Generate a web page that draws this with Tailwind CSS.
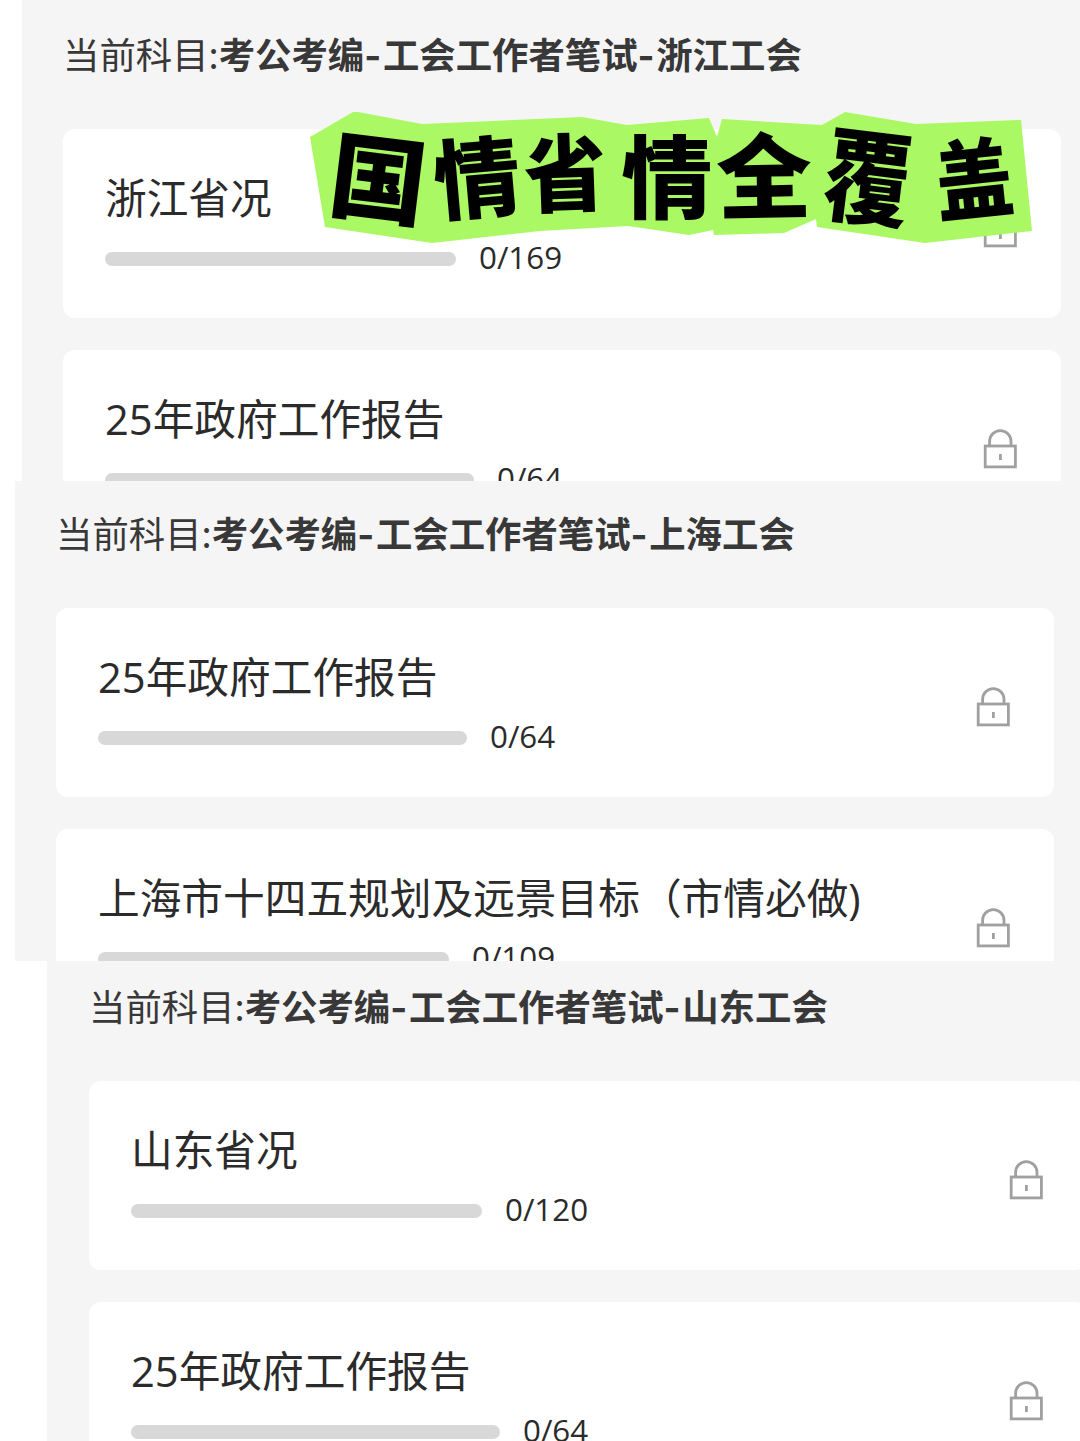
<!DOCTYPE html>
<html lang="zh-CN">
  <head>
    <meta charset="UTF-8" />
    <meta name="viewport" content="width=device-width, initial-scale=1.0" />
    <title>当前科目</title>
    <script src="https://cdn.jsdelivr.net/npm/@tailwindcss/browser@4"></script>
  </head>
  <body class="bg-white font-['Open_Sans','Noto_Sans_CJK_SC',sans-serif] text-[#2b2b2b]">
    <!-- lock icon shared by every card -->
    <svg class="hidden">
      <symbol id="lock" viewBox="0 0 34 40">
        <g fill="none" stroke="#a0a0a0" stroke-width="2.8">
          <rect x="2.2" y="17" width="30.2" height="20.9" />
          <path d="M6.6 17V12.4a10.7 10.7 0 0 1 21.4 0V17" />
          <path d="M17.4 25v6" />
        </g>
      </symbol>
    </svg>

    <div class="relative flex h-[1441px] w-[1080px] flex-col overflow-hidden">
      <section class="ml-[22px] h-[481px] shrink-0 overflow-hidden bg-[#f5f5f5] pl-[41px]">
        <h2 class="flex h-[129px] items-start pt-[29px] font-['Noto_Sans_CJK_SC',sans-serif] text-[36.4px] leading-[48px] whitespace-nowrap text-[#383838]">
          <span>当前科目:</span>
          <b>考公考编<span class="font-[Inter] tracking-[1.6px]">-</span>工会工作者笔试<span class="font-[Inter] tracking-[1.6px]">-</span>浙江工会</b>
        </h2>
        <div class="flex w-[998px] flex-col gap-8">
          <div class="flex h-[189px] items-start justify-between rounded-xl bg-white pr-[44px] pl-[42px]">
            <div class="pt-[43px]">
              <h3 class="text-[41.7px] leading-[52px] whitespace-nowrap">浙江省况</h3>
              <div class="mt-[15px] flex h-10 items-center gap-[23px]">
                <div class="h-[14px] w-[351px] rounded-full bg-[#d8d8d8]"></div>
                <span class="pb-[3px] text-[31.3px] leading-[35px]">0/169</span>
              </div>
            </div>
            <svg class="mt-[79px] h-10 w-[34px]"><use href="#lock" /></svg>
          </div>
          <div class="flex h-[189px] items-start justify-between rounded-xl bg-white pr-[44px] pl-[42px]">
            <div class="pt-[43px]">
              <h3 class="text-[41.7px] leading-[52px] whitespace-nowrap">25年政府工作报告</h3>
              <div class="mt-[15px] flex h-10 items-center gap-[23px]">
                <div class="h-[14px] w-[369px] rounded-full bg-[#d8d8d8]"></div>
                <span class="pb-[3px] text-[31.3px] leading-[35px]">0/64</span>
              </div>
            </div>
            <svg class="mt-[79px] h-10 w-[34px]"><use href="#lock" /></svg>
          </div>
        </div>
      </section>

      <section class="ml-[15px] h-[480px] shrink-0 overflow-hidden bg-[#f5f5f5] pl-[41px]">
        <h2 class="flex h-[127px] items-start pt-[27px] font-['Noto_Sans_CJK_SC',sans-serif] text-[36.4px] leading-[48px] whitespace-nowrap text-[#383838]">
          <span>当前科目:</span>
          <b>考公考编<span class="font-[Inter] tracking-[1.6px]">-</span>工会工作者笔试<span class="font-[Inter] tracking-[1.6px]">-</span>上海工会</b>
        </h2>
        <div class="flex w-[998px] flex-col gap-8">
          <div class="flex h-[189px] items-start justify-between rounded-xl bg-white pr-[44px] pl-[42px]">
            <div class="pt-[43px]">
              <h3 class="text-[41.7px] leading-[52px] whitespace-nowrap">25年政府工作报告</h3>
              <div class="mt-[15px] flex h-10 items-center gap-[23px]">
                <div class="h-[14px] w-[369px] rounded-full bg-[#d8d8d8]"></div>
                <span class="pb-[3px] text-[31.3px] leading-[35px]">0/64</span>
              </div>
            </div>
            <svg class="mt-[79px] h-10 w-[34px]"><use href="#lock" /></svg>
          </div>
          <div class="flex h-[189px] items-start justify-between rounded-xl bg-white pr-[44px] pl-[42px]">
            <div class="pt-[43px]">
              <h3 class="text-[41.7px] leading-[52px] whitespace-nowrap">上海市十四五规划及远景目标（市情必做)</h3>
              <div class="mt-[15px] flex h-10 items-center gap-[23px]">
                <div class="h-[14px] w-[351px] rounded-full bg-[#d8d8d8]"></div>
                <span class="pb-[3px] text-[31.3px] leading-[35px]">0/109</span>
              </div>
            </div>
            <svg class="mt-[79px] h-10 w-[34px]"><use href="#lock" /></svg>
          </div>
        </div>
      </section>

      <section class="ml-[47px] h-[480px] shrink-0 overflow-hidden bg-[#f5f5f5] pl-[42px]">
        <h2 class="flex h-[120px] items-start pt-5 font-['Noto_Sans_CJK_SC',sans-serif] text-[36.4px] leading-[48px] whitespace-nowrap text-[#383838]">
          <span>当前科目:</span>
          <b>考公考编<span class="font-[Inter] tracking-[1.6px]">-</span>工会工作者笔试<span class="font-[Inter] tracking-[1.6px]">-</span>山东工会</b>
        </h2>
        <div class="flex w-[998px] flex-col gap-8">
          <div class="flex h-[189px] items-start justify-between rounded-xl bg-white pr-[44px] pl-[42px]">
            <div class="pt-[43px]">
              <h3 class="text-[41.7px] leading-[52px] whitespace-nowrap">山东省况</h3>
              <div class="mt-[15px] flex h-10 items-center gap-[23px]">
                <div class="h-[14px] w-[351px] rounded-full bg-[#d8d8d8]"></div>
                <span class="pb-[3px] text-[31.3px] leading-[35px]">0/120</span>
              </div>
            </div>
            <svg class="mt-[79px] h-10 w-[34px]"><use href="#lock" /></svg>
          </div>
          <div class="flex h-[189px] items-start justify-between rounded-xl bg-white pr-[44px] pl-[42px]">
            <div class="pt-[43px]">
              <h3 class="text-[41.7px] leading-[52px] whitespace-nowrap">25年政府工作报告</h3>
              <div class="mt-[15px] flex h-10 items-center gap-[23px]">
                <div class="h-[14px] w-[369px] rounded-full bg-[#d8d8d8]"></div>
                <span class="pb-[3px] text-[31.3px] leading-[35px]">0/64</span>
              </div>
            </div>
            <svg class="mt-[79px] h-10 w-[34px]"><use href="#lock" /></svg>
          </div>
        </div>
      </section>

      <!-- cut-out paper sticker over the first card -->
      <svg class="absolute top-[110px] left-[308px] h-[136px] w-[726px]" viewBox="308 110 726 136">
        <path
          fill="#aaf863"
          d="M310 137 353 112 358 112 422 124 582 117 627 125 709 118 717 137 722 119 822 125 845 112 916 124 1021 120 1032 231 925 243 817 227 816 219 784 233 714 235 713 230 689 235 628 226 540 231 432 243 325 227Z"
        />
        <g class="font-['Noto_Sans_CJK_SC',sans-serif] font-black" font-size="90" text-anchor="middle" fill="#000">
          <text transform="translate(378.500 179) rotate(7) scale(1.07 1.05)" y="34">国</text>
          <text transform="translate(477 178) rotate(-5) scale(.96 .97)" y="34">情</text>
          <text transform="translate(565 173) rotate(-2) scale(.91 .94)" y="34">省</text>
          <text transform="translate(667 177) scale(1.01 1)" y="34">情</text>
          <text transform="translate(764 176) rotate(-1) scale(1.06 1.03)" y="34">全</text>
          <text transform="translate(868 178) rotate(7) scale(.96 1.13)" y="34">覆</text>
          <text transform="translate(974 179) rotate(-6) scale(.87 .97)" y="34">盖</text>
        </g>
      </svg>
    </div>
  </body>
</html>
